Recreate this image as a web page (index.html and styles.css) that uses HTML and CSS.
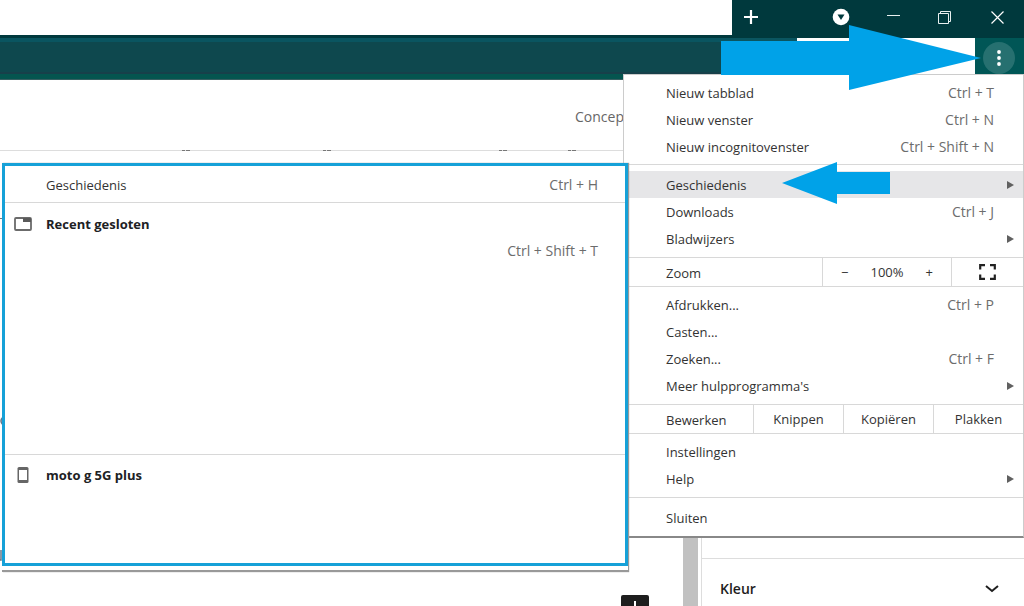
FILE: index.html
```html
<!DOCTYPE html>
<html lang="nl">
<head>
<meta charset="utf-8">
<meta name="viewport" content="width=device-width, initial-scale=1">
<title>Geschiedenis</title>
<link rel="stylesheet" href="styles.css">
</head>
<body>
<div class="browser">
  <header class="tabstrip">
    <div class="tab-area"></div>
    <div class="window-bar">
      <button class="win-btn" aria-label="Nieuw tabblad"><svg width="14" height="14" viewBox="0 0 14 14"><path d="M7 0v14M0 7h14" stroke="#fff" stroke-width="2.2"/></svg></button>
      <span class="grow"></span>
      <button class="win-btn" aria-label="Tabbladen zoeken"><svg width="18" height="18" viewBox="0 0 18 18"><circle cx="9" cy="9" r="8.3" fill="#fff"/><path d="M5.5 6.5h7L9 12z" fill="#00393d"/></svg></button>
      <button class="win-btn caption" aria-label="Minimaliseren"><svg width="13" height="13" viewBox="0 0 13 13"><path d="M0 4.500h13" stroke="#e8f0f0"/></svg></button>
      <button class="win-btn caption" aria-label="Vorig formaat"><svg width="13" height="13" viewBox="0 0 13 13" fill="none" stroke="#e8f0f0"><path d="M.5 2.500h10v10h-10zM2.500 2.500V.500h10v10h-2"/></svg></button>
      <button class="win-btn caption last" aria-label="Sluiten"><svg width="13" height="13" viewBox="0 0 13 13"><path d="M.5.5l12 12M12.500.5l-12 12" stroke="#fff" stroke-width="1.200"/></svg></button>
    </div>
  </header>
  <div class="toolbar">
    <div class="address"></div>
    <div class="blank"></div>
    <div class="menu-corner"><button class="more" aria-label="Menu"><svg width="4" height="16" viewBox="0 0 4 16" fill="#fff"><circle cx="2" cy="2" r="1.900"/><circle cx="2" cy="8" r="1.900"/><circle cx="2" cy="14" r="1.900"/></svg></button></div>
  </div>
  <main class="page">
    <div class="editor-head">Concep</div>
    <div class="editor">
      <div class="canvas"><button class="inserter" aria-label="Blok toevoegen"><svg width="14" height="14" viewBox="0 0 14 14"><path d="M7 0v14M0 7h14" stroke="#fff" stroke-width="2"/></svg></button></div>
      <div class="scrollbar"></div>
      <aside class="sidebar">
        <button class="panel">Kleur<svg width="14" height="8" viewBox="0 0 14 8"><path d="M1 1l6 5 6-5" fill="none" stroke="#1e1e1e" stroke-width="2"/></svg></button>
      </aside>
    </div>
    <svg class="traces" width="624" height="500" viewBox="0 0 624 500" fill="none" stroke="#777">
      <path d="M182 70.500h3m1 0h4M323 70.500h3m1 0h4M499 70.500h3m1 0h4M568 70.500h3m1 0h4M0 138.500h2"/>
      <path d="M3 337q-4 4 0 8M1 470v10h-2" stroke="#678" stroke-width="1.500"/>
    </svg>
  </main>

  <nav class="menu" aria-label="Hoofdmenu">
    <div class="group">
      <button class="item">Nieuw tabblad<kbd>Ctrl + T</kbd></button>
      <button class="item">Nieuw venster<kbd>Ctrl + N</kbd></button>
      <button class="item">Nieuw incognitovenster<kbd>Ctrl + Shift + N</kbd></button>
    </div>
    <div class="group roomy">
      <button class="item active">Geschiedenis<i class="more-arrow"></i></button>
      <button class="item">Downloads<kbd>Ctrl + J</kbd></button>
      <button class="item">Bladwijzers<i class="more-arrow"></i></button>
    </div>
    <div class="split">
      <span class="split-label">Zoom</span>
      <div class="zoom"><button aria-label="Uitzoomen">−</button><span>100%</span><button aria-label="Inzoomen">+</button></div>
      <button class="full" aria-label="Volledig scherm"><svg width="17" height="16" viewBox="0 0 17 16" fill="none" stroke="#222" stroke-width="2.200"><path d="M1.200 5.500V1.200H6M11 1.200h4.800v4.300M15.800 10.500v4.300H11M6 14.800H1.200v-4.300"/></svg></button>
    </div>
    <div class="group">
      <button class="item">Afdrukken...<kbd>Ctrl + P</kbd></button>
      <button class="item">Casten...</button>
      <button class="item">Zoeken...<kbd>Ctrl + F</kbd></button>
      <button class="item">Meer hulpprogramma's<i class="more-arrow"></i></button>
    </div>
    <div class="split">
      <span class="split-label">Bewerken</span>
      <button class="edit">Knippen</button>
      <button class="edit">Kopiëren</button>
      <button class="edit">Plakken</button>
    </div>
    <div class="group">
      <button class="item">Instellingen</button>
      <button class="item">Help<i class="more-arrow"></i></button>
    </div>
    <div class="group roomy">
      <button class="item">Sluiten</button>
    </div>
  </nav>

  <section class="submenu" aria-label="Geschiedenis">
    <div class="submenu-body">
      <div class="sub-group"><button class="item">Geschiedenis<kbd>Ctrl + H</kbd></button></div>
      <div class="sub-group recent">
        <div class="item strong"><svg class="row-icon" width="18" height="14" viewBox="0 0 18 14"><rect x="1" y="1" width="16" height="12" rx="1" fill="#fff" stroke="#6b6b6b" stroke-width="1.800"/><path d="M9 1h8v4H9z" fill="#5a5a5a"/></svg>Recent gesloten</div>
        <button class="item" aria-label="Tabblad opnieuw openen"><kbd>Ctrl + Shift + T</kbd></button>
      </div>
      <div class="sub-group device">
        <div class="item strong"><svg class="row-icon" width="18" height="18" viewBox="0 0 18 18"><rect x="3.500" y="1" width="11" height="16" rx="1.500" fill="#666"/><path d="M5 4h8v10H5z" fill="#fff"/></svg>moto g 5G plus</div>
      </div>
    </div>
  </section>

  <svg class="pointer pointer-top" width="260" height="66" viewBox="0 0 260 66"><path d="M0 16h128V0l132 33-132 32V50H0z" fill="#00a2e8"/></svg>
  <svg class="pointer pointer-item" width="109" height="42" viewBox="0 0 109 42"><path d="M0 21L55 0v10h53v22H55v10z" fill="#00a2e8"/></svg>
</div>
</body>
</html>
```
FILE: styles.css
```css
* { box-sizing: border-box; }

body {
  margin: 0;
  background: #fff;
  color: #333;
  font: 13px/20px "Open Sans", "Noto Sans", sans-serif;
}

button {
  margin: 0;
  padding: 0;
  border: 0;
  background: none;
  color: inherit;
  font: inherit;
}

svg { display: block; }

.browser {
  position: relative;
  display: flex;
  flex-direction: column;
  height: 100vh;
  min-height: 600px;
  overflow: hidden;
}

/* window frame */
.tabstrip {
  display: flex;
  height: 38px;
  background: #00393d;
}
.tab-area { flex: 1; height: 35px; background: #fff; }
.window-bar {
  display: flex;
  align-items: center;
  width: 292px;
  padding: 0 20px 4px 12px;
}
.grow { flex: 1; }
.caption { margin-left: 37px; }
.caption + .caption { margin-left: 38px; }
.caption.last { margin-left: 40px; }

.toolbar {
  display: flex;
  height: 42px;
  background: #005656;
  border-bottom: 1px solid #365f61;
}
.address {
  flex: 1;
  background: linear-gradient(#0a5560 0 4px, #0e484e 4px 34px, #17404a 34px 36px, #04554f 36px);
}
.blank { width: 178px; background: #fff; }
.menu-corner { width: 49px; padding: 4px 8px; }
.more {
  display: grid;
  place-items: center;
  width: 32px;
  height: 32px;
  border-radius: 50%;
  background: #267070;
}

/* page behind the menus */
.page {
  position: relative;
  flex: 1;
  display: flex;
  flex-direction: column;
  min-height: 0;
}
.traces { position: absolute; top: 0; left: 0; }
.editor-head {
  display: flex;
  align-items: center;
  justify-content: flex-end;
  height: 71px;
  padding: 4px 400px 0 0;
  border-bottom: 1px solid #ddd;
  color: #666;
  font-size: 14px;
}
.editor { flex: 1; display: flex; min-height: 0; }
.canvas {
  flex: 1;
  display: flex;
  align-items: flex-end;
  justify-content: flex-end;
  padding-right: 34px;
}
.inserter {
  display: flex;
  justify-content: center;
  width: 28px;
  height: 11px;
  padding-top: 6px;
  border-radius: 2px 2px 0 0;
  background: #1e1e1e;
  overflow: hidden;
}
.scrollbar { width: 15px; background: #c1c1c1; }
.sidebar {
  display: flex;
  align-items: flex-end;
  width: 323px;
  margin-left: 3px;
  border-left: 1px solid #ddd;
}
.panel {
  display: flex;
  align-items: center;
  justify-content: space-between;
  width: 100%;
  height: 48px;
  padding: 12px 25px 0 18px;
  border-top: 1px solid #ddd;
  color: #1e1e1e;
  font-size: 14px;
  font-weight: 600;
}

/* menus */
.menu {
  position: absolute;
  top: 74px;
  right: 0;
  width: 401px;
  border: 1px solid #ccc;
  border-bottom: 2px solid #888;
  background: #fff;
}
.group { padding: 4px 0; }
.group + .group { border-top: 1px solid #d8d8d8; }
.group.roomy { padding: 6px 0 5px; }
.split + .group { padding-bottom: 5px; }
.item {
  display: flex;
  align-items: center;
  width: 100%;
  height: 27px;
  padding: 0 29px 0 42px;
  text-align: left;
}
.item.active { background: #e6e6e8; }
kbd {
  margin-left: auto;
  color: #6c6c6c;
  font: inherit;
  font-size: 14px;
}
.more-arrow {
  margin: 0 -20px 0 auto;
  border: solid transparent;
  border-width: 4px 0 4px 7px;
  border-left-color: #606060;
}
.split {
  display: flex;
  height: 30px;
  border: solid #d8d8d8;
  border-width: 1px 0;
}
.split-label { flex: 1; padding: 5px 0 0 42px; }
.zoom {
  display: flex;
  align-items: center;
  justify-content: space-between;
  width: 129px;
  padding: 0 18px;
  border-left: 1px solid #d8d8d8;
}
.full {
  display: grid;
  place-items: center;
  width: 72px;
  border-left: 1px solid #d8d8d8;
}
.edit { width: 90px; border-left: 1px solid #d8d8d8; }

.submenu {
  position: absolute;
  top: 163px;
  left: 2px;
  right: 396px;
  padding-bottom: 4px;
  border-bottom: 2px solid #999;
  background: #fff;
  box-shadow: 1px 0 1px #999;
}
.submenu-body {
  height: 403px;
  border: 3px solid #16a1d8;
}
.submenu .item { padding: 0 27px 0 41px; }
.sub-group { padding: 5px 0 4px; }
.sub-group + .sub-group { border-top: 1px solid #d8d8d8; }
.recent { height: 252px; padding-top: 7px; }
.device { padding-top: 6px; }
.strong { color: #202124; font-weight: 700; }
.row-icon { margin: 0 14px 0 -32px; }

/* arrows drawn over the window */
.pointer { position: absolute; }
.pointer-top { top: 25px; right: 43px; }
.pointer-item { top: 162px; right: 133px; }
```
